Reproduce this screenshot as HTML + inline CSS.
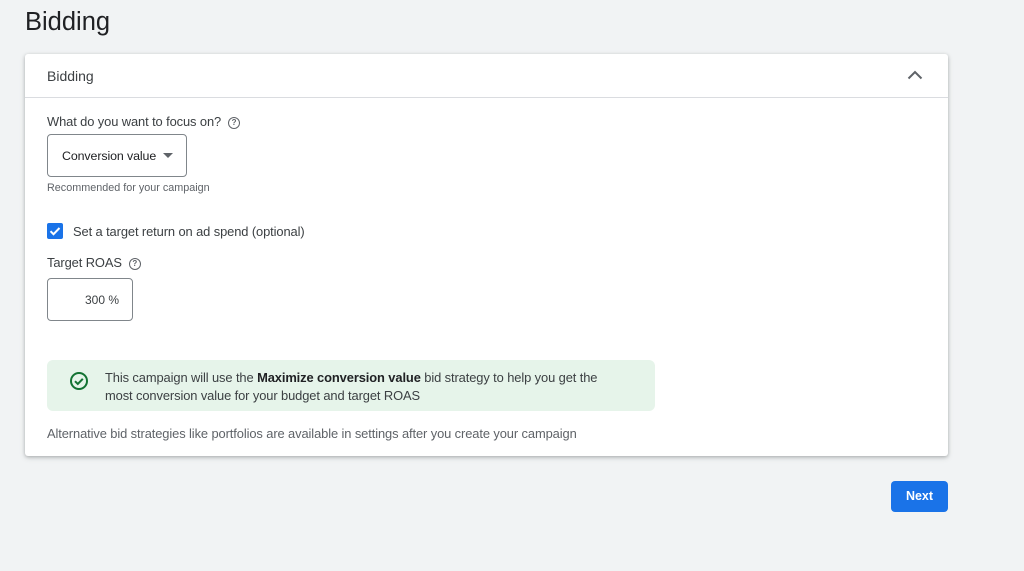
<!DOCTYPE html>
<html><head><style>
*{margin:0;padding:0;box-sizing:border-box}
body{width:1024px;height:571px;background:#f1f3f4;font-family:"Liberation Sans",sans-serif;color:#3c4043;position:relative;overflow:hidden}
.abs{position:absolute;white-space:nowrap}
h1{position:absolute;left:25px;top:8px;font-size:25.5px;font-weight:400;color:#202124}
.card{position:absolute;left:25px;top:54px;width:923px;height:402px;background:#fff;border-radius:3px;box-shadow:0 1px 3px rgba(60,64,67,.3),0 2px 6px rgba(60,64,67,.15)}
.hdr{position:absolute;left:0;top:0;width:100%;height:44px;border-bottom:1px solid #dadce0}
.t13{font-size:12.9px;letter-spacing:-.1px}
.q{display:inline-block;width:12px;height:12px;border:1.3px solid #5f6368;border-radius:50%;font-size:8px;text-align:center;line-height:10px;font-weight:bold;color:#5f6368;vertical-align:middle}
</style></head><body>
<h1>Bidding</h1>
<div class="card">
 <div class="hdr">
  <div class="abs" style="left:22px;top:14px;font-size:14px;color:#3c4043">Bidding</div>
  <svg class="abs" style="left:882px;top:15px" width="16" height="12" viewBox="0 0 16 12"><path d="M1.5 9.5 L8 3 L14.5 9.5" fill="none" stroke="#5f6368" stroke-width="2"/></svg>
 </div>
 <div class="abs t13" style="left:22px;top:60px">What do you want to focus on? &nbsp;<span class="q">?</span></div>
 <div class="abs" style="left:22px;top:80px;width:140px;height:43px;border:1px solid #80868b;border-radius:4px"></div>
 <div class="abs" style="left:37px;top:95px;color:#202124;font-size:12.4px;letter-spacing:-.1px">Conversion value</div>
 <svg class="abs" style="left:138px;top:99px" width="10" height="5"><path d="M0 0h10L5 5z" fill="#5f6368"/></svg>
 <div class="abs" style="left:22px;top:128px;font-size:10.8px;color:#5f6368">Recommended for your campaign</div>
 <div class="abs" style="left:22px;top:169px;width:16px;height:16px;background:#1a73e8;border-radius:2px"></div>
 <svg class="abs" style="left:22px;top:169px" width="16" height="16"><path d="M3.5 8.2 L6.5 11.2 L12.5 5" fill="none" stroke="#fff" stroke-width="2"/></svg>
 <div class="abs t13" style="left:48px;top:170px">Set a target return on ad spend (optional)</div>
 <div class="abs t13" style="left:22px;top:201px">Target ROAS &nbsp;<span class="q">?</span></div>
 <div class="abs" style="left:22px;top:224px;width:86px;height:43px;border:1px solid #80868b;border-radius:4px"></div>
 <div class="abs" style="left:60px;top:239px;font-size:12px;color:#3c4043">300 %</div>
 <div class="abs" style="left:22px;top:306px;width:608px;height:51px;background:#e6f4ea;border-radius:6px"></div>
 <svg class="abs" style="left:44px;top:317px" width="20" height="20"><circle cx="10" cy="10" r="8" fill="none" stroke="#137333" stroke-width="2"/><path d="M6 10.2l2.8 2.8 5-5.2" fill="none" stroke="#137333" stroke-width="2"/></svg>
 <div class="abs t13" style="left:80px;top:315px;line-height:18px">This campaign will use the <b style="color:#202124">Maximize conversion value</b> bid strategy to help you get the<br>most conversion value for your budget and target ROAS</div>
 <div class="abs t13" style="left:22px;top:372px;color:#5f6368">Alternative bid strategies like portfolios are available in settings after you create your campaign</div>
</div>
<div class="abs" style="left:891px;top:481px;width:57px;height:31px;background:#1a73e8;border-radius:4px;color:#fff;font-size:12.5px;font-weight:bold;text-align:center;line-height:31px">Next</div>
</body></html>
